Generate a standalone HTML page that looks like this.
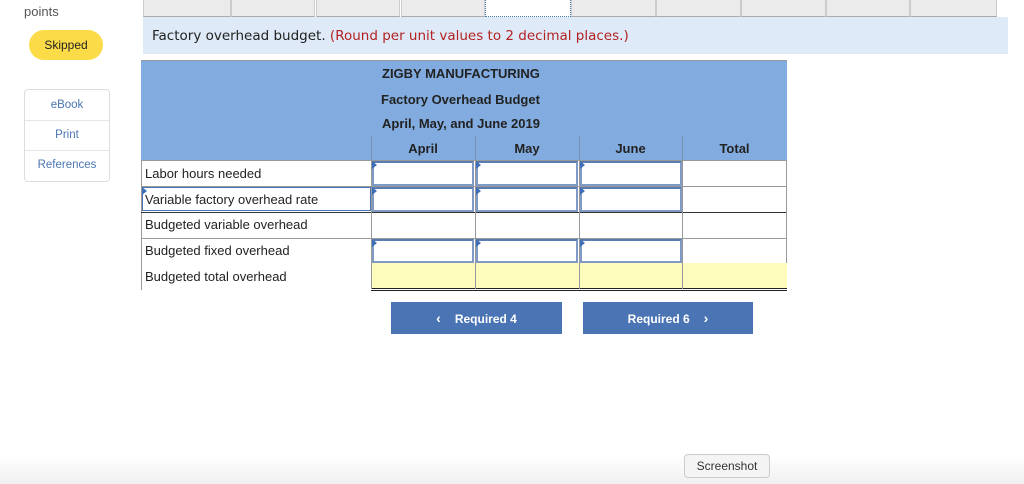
<!DOCTYPE html>
<html><head><meta charset="utf-8"><style>
body{margin:0;width:1024px;height:484px;position:relative;background:#fff;font-family:"Liberation Sans",Arial,sans-serif;overflow:hidden}
.abs{position:absolute}
.tab{position:absolute;top:0;height:16px;background:#ebebeb;border-left:1px solid #ccc;border-right:1px solid #ccc;border-bottom:1px solid #aaa}
.inp{position:absolute;box-sizing:border-box;background:#fff;border:2px solid #7f9ac4;border-top-color:#5a7bb0}
.tri{position:absolute;width:0;height:0;border-top:4px solid transparent;border-bottom:4px solid transparent;border-left:5px solid #3d6fb8}
.lbl{position:absolute;left:145px;font-size:13px;color:#222}
.hdr{position:absolute;font-weight:bold;font-size:13px;color:#222;text-align:center}
.btn{position:absolute;top:302px;height:32px;background:#4a74b4;color:#fff;font-weight:bold;font-size:12px;line-height:32px;text-align:center}
</style></head><body>
<div class="abs" style="left:24px;top:4px;font-size:13px;color:#555">points</div>
<div class="abs" style="left:29px;top:30px;width:74px;height:30px;border-radius:15px;background:#fbdc48;font-size:12px;line-height:30px;text-align:center;color:#222">Skipped</div>
<div class="abs" style="left:24px;top:89px;width:84px;height:91px;border:1px solid #ddd;border-radius:4px;font-size:11.5px;color:#4a74b4;text-align:center">
<div style="height:30px;line-height:30px;border-bottom:1px solid #e5e5e5">eBook</div>
<div style="height:29px;line-height:29px;border-bottom:1px solid #e5e5e5">Print</div>
<div style="height:29px;line-height:29px">References</div></div>

<div class="tab" style="left:143px;width:86px"></div>
<div class="tab" style="left:231px;width:82px"></div>
<div class="tab" style="left:316px;width:82px"></div>
<div class="tab" style="left:401px;width:82px"></div>
<div class="abs" style="left:485px;top:0;width:84px;height:16px;background:#fff;border:1px dotted #4a74b4;border-top:none"></div>
<div class="tab" style="left:571px;width:83px"></div>
<div class="tab" style="left:656px;width:83px"></div>
<div class="tab" style="left:741px;width:83px"></div>
<div class="tab" style="left:826px;width:82px"></div>
<div class="tab" style="left:910px;width:85px"></div>
<div class="abs" style="left:143px;top:17px;width:865px;height:37px;background:#deeaf7"></div>
<div class="abs" style="left:152px;top:28px;color:#222;font-family:'DejaVu Sans',sans-serif;font-size:13.5px">Factory overhead budget. <span style="color:#b22222">(Round per unit values to 2 decimal places.)</span></div>

<div class="abs" style="left:141px;top:60px;width:646px;height:100px;background:#82acdf;border-top:1px solid #999"></div>
<div class="hdr" style="left:382px;top:66px;text-align:left">ZIGBY MANUFACTURING</div>
<div class="hdr" style="left:381px;top:92px;text-align:left">Factory Overhead Budget</div>
<div class="hdr" style="left:382px;top:116px;text-align:left">April, May, and June 2019</div>
<div class="abs" style="left:371px;top:136px;width:1px;height:24px;background:#7890b0"></div>
<div class="abs" style="left:475px;top:136px;width:1px;height:24px;background:#7890b0"></div>
<div class="abs" style="left:579px;top:136px;width:1px;height:24px;background:#7890b0"></div>
<div class="abs" style="left:682px;top:136px;width:1px;height:24px;background:#7890b0"></div>
<div class="hdr" style="left:371px;top:141px;width:104px">April</div>
<div class="hdr" style="left:475px;top:141px;width:104px">May</div>
<div class="hdr" style="left:579px;top:141px;width:103px">June</div>
<div class="hdr" style="left:682px;top:141px;width:105px">Total</div>

<div class="abs" style="left:141px;top:160px;width:1px;height:130px;background:#999"></div>
<div class="abs" style="left:141px;top:160px;width:646px;height:1px;background:#999"></div>
<div class="abs" style="left:141px;top:186px;width:646px;height:1px;background:#999"></div>
<div class="abs" style="left:141px;top:212px;width:646px;height:1px;background:#333"></div>
<div class="abs" style="left:141px;top:238px;width:646px;height:1px;background:#999"></div>
<div class="abs" style="left:142px;top:187px;width:229px;height:24px;border:1px solid #4a74b4;box-sizing:border-box"></div>
<div class="abs" style="left:371px;top:263px;width:416px;height:25px;background:#fefcbc"></div>
<div class="abs" style="left:371px;top:288px;width:416px;height:1px;background:#222"></div>
<div class="abs" style="left:371px;top:290px;width:416px;height:1px;background:#222"></div>
<div class="abs" style="left:371px;top:160px;width:1px;height:129px;background:#999"></div>
<div class="abs" style="left:475px;top:160px;width:1px;height:129px;background:#999"></div>
<div class="abs" style="left:579px;top:160px;width:1px;height:129px;background:#999"></div>
<div class="abs" style="left:682px;top:160px;width:1px;height:129px;background:#999"></div>
<div class="abs" style="left:786px;top:160px;width:1px;height:103px;background:#999"></div>

<div class="inp" style="left:372px;top:161px;width:102px;height:25px"></div>
<div class="inp" style="left:476px;top:161px;width:102px;height:25px"></div>
<div class="inp" style="left:580px;top:161px;width:102px;height:25px"></div>
<div class="inp" style="left:372px;top:187px;width:102px;height:25px"></div>
<div class="inp" style="left:476px;top:187px;width:102px;height:25px"></div>
<div class="inp" style="left:580px;top:187px;width:102px;height:25px"></div>
<div class="inp" style="left:372px;top:239px;width:102px;height:24px"></div>
<div class="inp" style="left:476px;top:239px;width:102px;height:24px"></div>
<div class="inp" style="left:580px;top:239px;width:102px;height:24px"></div>
<div class="tri" style="left:372px;top:161px"></div><div class="tri" style="left:476px;top:161px"></div><div class="tri" style="left:580px;top:161px"></div>
<div class="tri" style="left:372px;top:187px"></div><div class="tri" style="left:476px;top:187px"></div><div class="tri" style="left:580px;top:187px"></div>
<div class="tri" style="left:372px;top:239px"></div><div class="tri" style="left:476px;top:239px"></div><div class="tri" style="left:580px;top:239px"></div>
<div class="tri" style="left:142px;top:187px"></div>

<div class="lbl" style="top:166px">Labor hours needed</div>
<div class="lbl" style="top:192px">Variable factory overhead rate</div>
<div class="lbl" style="top:217px">Budgeted variable overhead</div>
<div class="lbl" style="top:243px">Budgeted fixed overhead</div>
<div class="lbl" style="top:269px">Budgeted total overhead</div>

<div class="btn" style="left:391px;width:171px"><span style="font-size:14px;margin-right:14px">&#8249;</span>Required 4</div>
<div class="btn" style="left:583px;width:170px">Required 6<span style="font-size:14px;margin-left:14px">&#8250;</span></div>

<div class="abs" style="left:0;top:455px;width:1024px;height:29px;background:linear-gradient(#fff,#f0f0f0)"></div>
<div class="abs" style="left:684px;top:454px;width:84px;height:22px;background:#f4f4f4;border:1px solid #ccc;border-radius:4px;font-size:12px;color:#333;text-align:center;line-height:22px">Screenshot</div>
</body></html>
